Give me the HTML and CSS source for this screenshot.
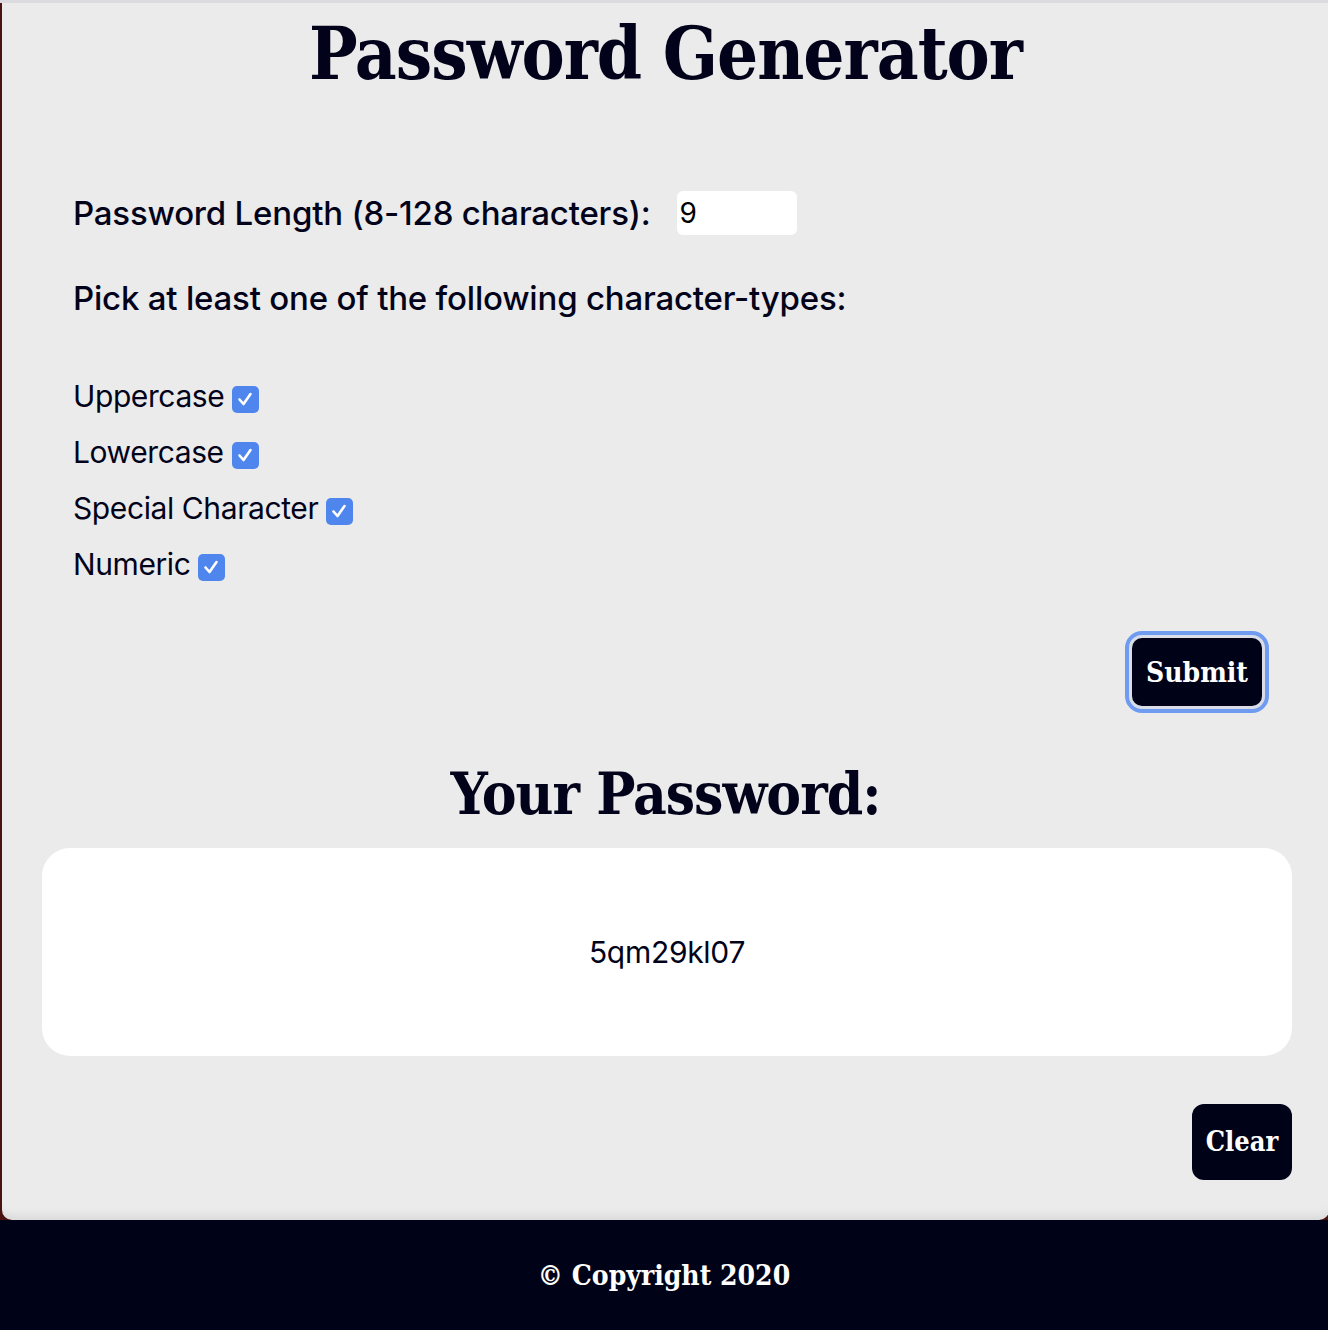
FILE: index.html
```html
<!DOCTYPE html>
<html lang="en">
<head>
<meta charset="utf-8">
<title>Password Generator</title>
<link rel="stylesheet" href="styles.css">
</head>
<body>
<div class="topline"></div>
<main class="card">
  <h1 class="title">Password Generator</h1>
  <form class="form">
    <div class="length-row">
      <label class="label-lg" for="len">Password Length (8-128 characters):</label>
      <input class="len-input" id="len" type="text" value="9">
    </div>
    <p class="label-lg pick">Pick at least one of the following character-types:</p>
    <ul class="checks">
      <li class="check-row"><span>Uppercase</span><span class="box"><svg viewBox="0 0 26 26" width="26" height="26"><path d="M7.5 13.5l4 4.5 7-10" fill="none" stroke="#fff" stroke-width="2.6" stroke-linecap="round" stroke-linejoin="round"/></svg></span></li>
      <li class="check-row"><span>Lowercase</span><span class="box"><svg viewBox="0 0 26 26" width="26" height="26"><path d="M7.5 13.5l4 4.5 7-10" fill="none" stroke="#fff" stroke-width="2.6" stroke-linecap="round" stroke-linejoin="round"/></svg></span></li>
      <li class="check-row"><span>Special Character</span><span class="box"><svg viewBox="0 0 26 26" width="26" height="26"><path d="M7.5 13.5l4 4.5 7-10" fill="none" stroke="#fff" stroke-width="2.6" stroke-linecap="round" stroke-linejoin="round"/></svg></span></li>
      <li class="check-row"><span>Numeric</span><span class="box"><svg viewBox="0 0 26 26" width="26" height="26"><path d="M7.5 13.5l4 4.5 7-10" fill="none" stroke="#fff" stroke-width="2.6" stroke-linecap="round" stroke-linejoin="round"/></svg></span></li>
    </ul>
    <div class="submit-row">
      <button type="button" class="btn btn-submit">Submit</button>
    </div>
  </form>
  <h2 class="your">Your Password:</h2>
  <div class="result">5qm29kl07</div>
  <div class="clear-row">
    <button type="button" class="btn btn-clear">Clear</button>
  </div>
</main>
<footer class="footer">© Copyright 2020</footer>
</body>
</html>
```
FILE: styles.css
```css
* { box-sizing: border-box; }
html, body { margin: 0; padding: 0; }
body {
  background: #4a1210;
  font-family: Inter, "Noto Sans", sans-serif;
  color: #02031a;
  width: 1328px;
  overflow: hidden;
}
.topline { height: 3px; background: #dcdce0; }
.card {
  margin-left: 2px;
  margin-right: -1px;
  background: #ebebeb;
  border-radius: 0 0 10px 10px;
  height: 1217px;
  box-shadow: inset 0 -14px 10px -10px rgba(0,0,0,0.08);
  padding-top: 1px;
}
.title {
  font-family: "DejaVu Serif Condensed", "DejaVu Serif", serif;
  font-weight: bold;
  font-size: 72px;
  line-height: 1;
  margin: 14px 0 0;
  text-align: center;
  letter-spacing: -1px;
}
.form { padding: 0 71px; margin-top: 101px; }
.length-row { display: flex; align-items: center; gap: 27px; }
.label-lg { font-size: 33px; letter-spacing: -0.2px; margin: 0; font-weight: 500; }
.len-input {
  width: 120px; height: 44px;
  border: none; border-radius: 6px; background: #fff;
  font-family: Inter, sans-serif; font-size: 28px; padding: 0 2px;
  color: #000;
}
.pick { margin-top: 43px; }
.checks { list-style: none; margin: 60px 0 0; padding: 0; display: flex; flex-direction: column; gap: 20px; }
.check-row { display: flex; align-items: center; gap: 8px; font-size: 30px; letter-spacing: -0.4px; line-height: 36px; }
.box { width: 27px; height: 27px; border-radius: 5px; background: #4f86ee; display: inline-flex; margin-top: 6px; }
.box svg { display: block; }
.submit-row { display: flex; justify-content: flex-end; margin-top: 56px; margin-right: -4px; }
.btn {
  font-family: "DejaVu Serif Condensed", "DejaVu Serif", serif;
  font-weight: bold;
  color: #fff;
  background: #000318;
  border: none;
  cursor: pointer;
}
.btn-submit {
  font-size: 28px;
  width: 130px; height: 68px;
  border-radius: 10px;
  outline: 4px solid #6f9cf0;
  outline-offset: 3px;
  box-shadow: 0 0 0 3px #d8dde8;
}
.your {
  font-family: "DejaVu Serif Condensed", "DejaVu Serif", serif;
  font-weight: bold;
  font-size: 58px;
  text-align: center;
  margin: 54px 0 0;
  line-height: 1.2;
  letter-spacing: -1px;
}
.result {
  margin: 18px 37px 0 40px;
  height: 208px;
  background: #fff;
  border-radius: 28px;
  display: flex; align-items: center; justify-content: center;
  font-size: 30px; letter-spacing: -0.3px;
}
.clear-row { display: flex; justify-content: flex-end; margin: 48px 37px 0 0; }
.btn-clear { font-size: 27px; width: 100px; height: 76px; border-radius: 12px; }
.footer {
  background: #000318;
  color: #fff;
  height: 110px;
  display: flex; align-items: center; justify-content: center;
  font-family: "DejaVu Serif Condensed", "DejaVu Serif", serif;
  font-weight: bold;
  font-size: 28px;
}
```
